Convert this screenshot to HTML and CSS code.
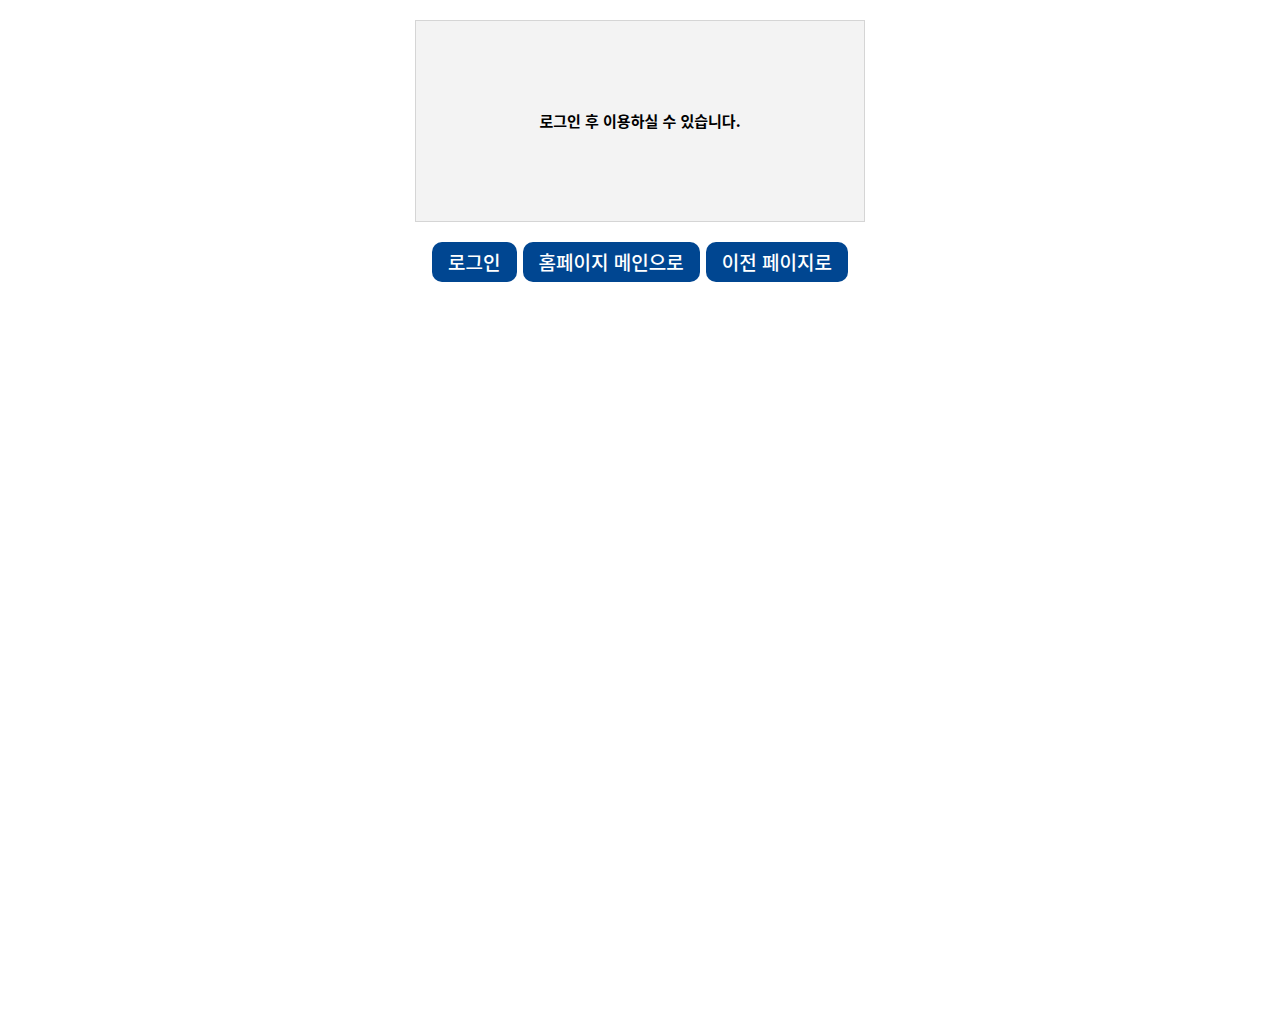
FILE: index.html
```html
<!DOCTYPE html>
<html lang="ko">
<head>
    <meta charset="UTF-8">
    <meta name="viewport" content="width=device-width, initial-scale=1.0">
    <title>로그인 안내</title>
    <link rel="stylesheet" href="styles.css">
</head>
<body>
    <div class="container">
        <div class="message">
            <p>로그인 후 이용하실 수 있습니다.</p>
        </div>
        <div class="buttons">
            <a href="#" class="btn">로그인</a>
            <a href="#" class="btn">홈페이지 메인으로</a>
            <a href="#" class="btn">이전 페이지로</a>
        </div>
    </div>
</body>
</html>
```
FILE: styles.css
```css
* {
    box-sizing: border-box;
}
body {
    margin: 0;
    font-family: "Noto Sans CJK KR", sans-serif;
    background: #fff;
    color: #000;
}
.container {
    max-width: 450px;
    margin: 20px auto;
}
.message {
    padding: 88px 20px;
    border: 1px solid #d5d5d5;
    background: #f3f3f3;
    text-align: center;
}
.message p {
    margin: 0;
    font-size: 15px;
    font-weight: bold;
    line-height: 24px;
}
.buttons {
    display: flex;
    flex-wrap: wrap;
    justify-content: center;
    gap: 6px;
    margin-top: 20px;
}
.btn {
    padding: 0 16px;
    border-radius: 10px;
    background: #004691;
    color: #fff;
    font-size: 19px;
    font-weight: 500;
    line-height: 40px;
    text-decoration: none;
}
.btn:hover {
    background: #003570;
}
```
